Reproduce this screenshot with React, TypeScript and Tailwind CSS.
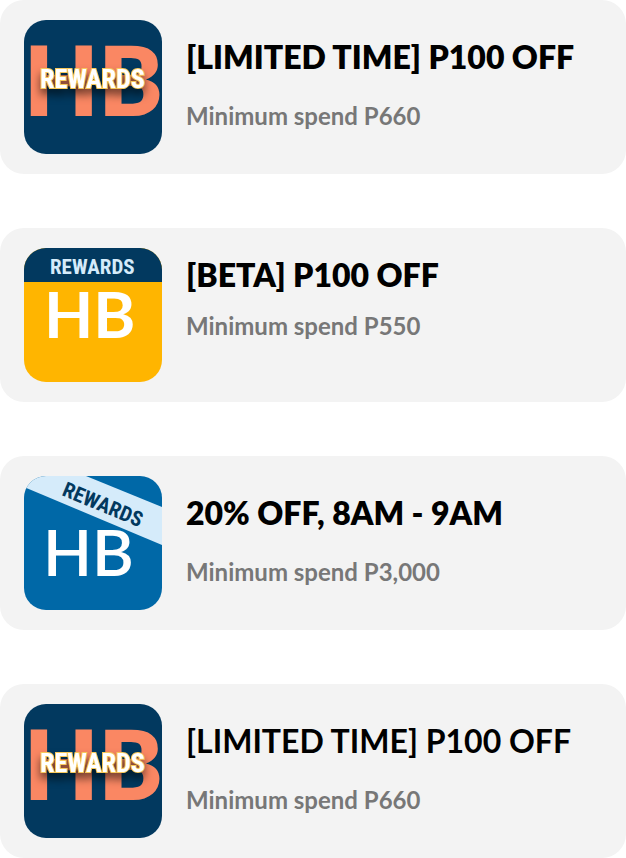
import type { ReactNode } from "react";

const NARROW = "font-['Roboto_Condensed','Liberation_Sans_Narrow','DejaVu_Sans_Condensed',sans-serif] font-bold";

function Badge({ children }: { children: ReactNode }) {
  return (
    <svg viewBox="0 0 138 134" role="img" aria-label="HB Rewards" className="h-[134px] w-[138px] shrink-0 rounded-[22px]">
      {children}
    </svg>
  );
}

function LimitedBadge() {
  return (
    <Badge>
      <rect width="138" height="134" fill="#02395f" />
      <text x="0" y="96" fontSize="96" fill="#fa8763" className="font-[Lato,sans-serif] font-extrabold">HB</text>
      <text
        x="16"
        y="68"
        fontSize="26"
        fill="#ffffff"
        stroke="#f7c95c"
        strokeWidth="2"
        paintOrder="stroke"
        className={NARROW + " drop-shadow-[0_6px_4px_rgba(0,0,0,0.6)]"}
      >
        REWARDS
      </text>
    </Badge>
  );
}

function BetaBadge() {
  return (
    <Badge>
      <rect width="138" height="134" fill="#ffb500" />
      <rect width="138" height="34" fill="#02395f" />
      <text x="26" y="26" fontSize="21" fill="#d5ebfa" className={NARROW}>REWARDS</text>
      <text x="20" y="90" fontSize="64" fill="#ffffff" className="font-[Lato,sans-serif] font-bold">HB</text>
    </Badge>
  );
}

function HourBadge() {
  return (
    <Badge>
      <rect width="138" height="134" fill="#0068a7" />
      <polygon points="0,11 0,-25 62,0 138,31 138,69" fill="#d5ebfa" />
      <text x="0" y="0" fontSize="21" fill="#02395f" transform="translate(37 19) rotate(22.5)" className={NARROW}>REWARDS</text>
      <text x="19" y="100" fontSize="64" fill="#ffffff" className="font-[Lato,sans-serif] font-semibold">HB</text>
    </Badge>
  );
}

type Reward = { title: string; spend: string; badge: ReactNode; weight: string; layout: string };

const rewards: Reward[] = [
  { title: "[LIMITED TIME] P100 OFF", spend: "Minimum spend P660", badge: <LimitedBadge />, weight: "font-extrabold", layout: "gap-6 pt-4" },
  { title: "[BETA] P100 OFF", spend: "Minimum spend P550", badge: <BetaBadge />, weight: "font-extrabold", layout: "gap-4 pt-1.5" },
  { title: "20% OFF, 8AM - 9AM", spend: "Minimum spend P3,000", badge: <HourBadge />, weight: "font-extrabold", layout: "gap-6 pt-4" },
  { title: "[LIMITED TIME] P100 OFF", spend: "Minimum spend P660", badge: <LimitedBadge />, weight: "font-bold", layout: "gap-6 pt-4" },
];

export default function App() {
  return (
    <main className="flex flex-col gap-[54px] bg-white font-[Lato,sans-serif]">
      {rewards.map((r, i) => (
        <article key={i} className="flex items-start gap-6 rounded-3xl bg-[#f3f3f3] px-6 py-5">
          {r.badge}
          <div className={"flex min-w-0 flex-col " + r.layout}>
            <h2 className={"text-[32px] leading-[42px] text-black " + r.weight}>{r.title}</h2>
            <p className="text-2xl leading-[28px] font-bold text-[#777777]">{r.spend}</p>
          </div>
        </article>
      ))}
    </main>
  );
}
